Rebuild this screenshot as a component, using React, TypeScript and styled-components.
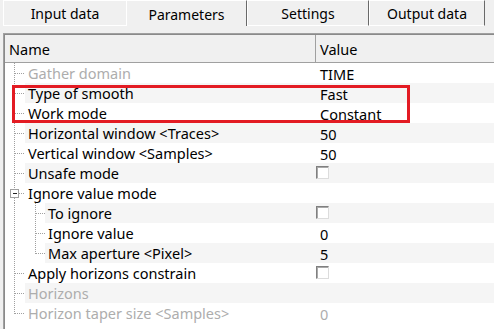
import React from "react";
import styled, { createGlobalStyle } from "styled-components";

const Global = createGlobalStyle`
  html, body { margin: 0; padding: 0; background: #f0f0f0; }
  body { font-family: "Noto Sans", "Open Sans", sans-serif; font-size: 14px; color: #000; }
`;

const Page = styled.div`
  position: relative;
  width: 494px;
  height: 329px;
  overflow: hidden;
  background: #f0f0f0;
`;

const TabStrip = styled.div`
  display: flex;
  height: 26px;
  padding-left: 3px;
  box-sizing: border-box;
`;

const Tab = styled.div<{ $w: number; $selected?: boolean; $beforeSelected?: boolean }>`
  box-sizing: border-box;
  width: ${(p) => p.$w}px;
  height: 26px;
  display: flex;
  align-items: center;
  justify-content: center;
  padding-top: 1px;
  background: #f0f0f0;
  border-top: 1px solid #fff;
  border-left: 1px solid #fff;
  border-right: ${(p) => (p.$beforeSelected ? "none" : "1px solid #696969")};
  border-bottom: ${(p) => (p.$selected ? "none" : "1px solid #fff")};
  white-space: nowrap;
`;

const Panel = styled.div`
  padding: 7px 0 0 3px;
`;

const Frame = styled.div`
  border-top: 1px solid #a0a0a0;
  border-left: 1px solid #a0a0a0;
`;

const Inner = styled.div`
  border-top: 1px solid #8a8a8a;
  border-left: 1px solid #8a8a8a;
  background: #fff;
  height: 300px;
  font-size: 14.5px;
`;

const Header = styled.div`
  display: flex;
  height: 27px;
  border-bottom: 1px solid #a0a0a0;
  background: #f0f0f0;
`;

const HeaderCell = styled.div<{ $w?: number }>`
  box-sizing: border-box;
  ${(p) => (p.$w ? `width: ${p.$w}px;` : "flex: 1;")}
  display: flex;
  align-items: center;
  padding-left: 4px;
  padding-top: 1px;
  border-right: ${(p) => (p.$w ? "1px solid #a0a0a0" : "none")};
`;

const Row = styled.div`
  display: flex;
  height: 20px;
`;

const NameCol = styled.div`
  display: flex;
  width: 311px;
  flex-shrink: 0;
`;

const Gutter = styled.svg`
  display: block;
  flex-shrink: 0;
`;

const Label = styled.div<{ $alt: boolean; $disabled?: boolean }>`
  box-sizing: border-box;
  flex: 1;
  background: ${(p) => (p.$alt ? "#f5f5f5" : "#fff")};
  color: ${(p) => (p.$disabled ? "#adadad" : "#000")};
  padding: 1px 0 0 3px;
  line-height: 19px;
  white-space: nowrap;
`;

const ValueCell = styled.div<{ $alt: boolean; $disabled?: boolean }>`
  box-sizing: border-box;
  flex: 1;
  display: flex;
  align-items: center;
  background: ${(p) => (p.$alt ? "#f5f5f5" : "#fff")};
  color: ${(p) => (p.$disabled ? "#adadad" : "#000")};
  line-height: 20px;
  white-space: nowrap;
`;

const ValueText = styled.span`
  padding: 1px 0 0 4px;
`;

const CheckBox = styled.span`
  box-sizing: border-box;
  width: 13px;
  height: 13px;
  margin-top: -1px;
  background: #fff;
  border-top: 1px solid #808080;
  border-left: 1px solid #808080;
  border-right: 1px solid #dcdcdc;
  border-bottom: 1px solid #dcdcdc;
  box-shadow: inset 1px 1px 0 #a9a9a9;
`;

const Highlight = styled.div`
  position: absolute;
  left: 12px;
  top: 85px;
  width: 398px;
  height: 38px;
  box-sizing: border-box;
  border: 3px solid #e31b23;
  pointer-events: none;
`;

type Item = {
  name: string;
  value?: string;
  level?: number;
  disabled?: boolean;
  valueDisabled?: boolean;
  check?: boolean;
  expander?: boolean;
  lastChild?: boolean;
  last?: boolean;
};

const items: Item[] = [
  { name: "Gather domain", value: "TIME", disabled: true },
  { name: "Type of smooth", value: "Fast" },
  { name: "Work mode", value: "Constant" },
  { name: "Horizontal window <Traces>", value: "50" },
  { name: "Vertical window <Samples>", value: "50" },
  { name: "Unsafe mode", check: true },
  { name: "Ignore value mode", expander: true },
  { name: "To ignore", level: 1, check: true },
  { name: "Ignore value", level: 1, value: "0" },
  { name: "Max aperture <Pixel>", level: 1, value: "5", lastChild: true },
  { name: "Apply horizons constrain", check: true },
  { name: "Horizons", disabled: true },
  { name: "Horizon taper size <Samples>", value: "0", disabled: true, valueDisabled: true, last: true },
];

const dot = { stroke: "#a0a0a0", strokeWidth: 1, strokeDasharray: "1 1", shapeRendering: "crispEdges" as const };

function TreeLines({ item }: { item: Item }) {
  const level = item.level ?? 0;
  const w = level === 0 ? 20 : 40;
  return (
    <Gutter width={w} height={20} viewBox={`0 0 ${w} 20`}>
      {item.expander ? (
        <>
          <line x1={9.5} y1={0} x2={9.5} y2={6} {...dot} />
          <line x1={9.5} y1={15} x2={9.5} y2={20} {...dot} />
          <rect x={5.5} y={6.5} width={8} height={8} fill="#fff" stroke="#a0a0a0" shapeRendering="crispEdges" />
          <line x1={7.5} y1={10.5} x2={12} y2={10.5} stroke="#222" shapeRendering="crispEdges" />
          <line x1={14} y1={10.5} x2={20} y2={10.5} {...dot} />
        </>
      ) : (
        <>
          <line x1={9.5} y1={0} x2={9.5} y2={item.last ? 11 : 20} {...dot} />
          {level === 0 && <line x1={10} y1={10.5} x2={20} y2={10.5} {...dot} />}
          {level === 1 && (
            <>
              <line x1={30.5} y1={0} x2={30.5} y2={item.lastChild ? 11 : 20} {...dot} />
              <line x1={31} y1={10.5} x2={40} y2={10.5} {...dot} />
            </>
          )}
        </>
      )}
    </Gutter>
  );
}

export default function App() {
  return (
    <Page>
      <Global />
      <TabStrip>
        <Tab $w={123} $beforeSelected>Input data</Tab>
        <Tab $w={121} $selected>Parameters</Tab>
        <Tab $w={122}>Settings</Tab>
        <Tab $w={116}>Output data</Tab>
      </TabStrip>
      <Panel>
        <Frame>
          <Inner>
            <Header>
              <HeaderCell $w={311}>Name</HeaderCell>
              <HeaderCell>Value</HeaderCell>
            </Header>
            {items.map((it, i) => {
              const alt = i % 2 === 1;
              return (
                <Row key={it.name}>
                  <NameCol>
                    <TreeLines item={it} />
                    <Label $alt={alt} $disabled={it.disabled}>{it.name}</Label>
                  </NameCol>
                  <ValueCell $alt={alt} $disabled={it.valueDisabled}>
                    {it.check ? <CheckBox /> : it.value ? <ValueText>{it.value}</ValueText> : null}
                  </ValueCell>
                </Row>
              );
            })}
          </Inner>
        </Frame>
      </Panel>
      <Highlight />
    </Page>
  );
}
